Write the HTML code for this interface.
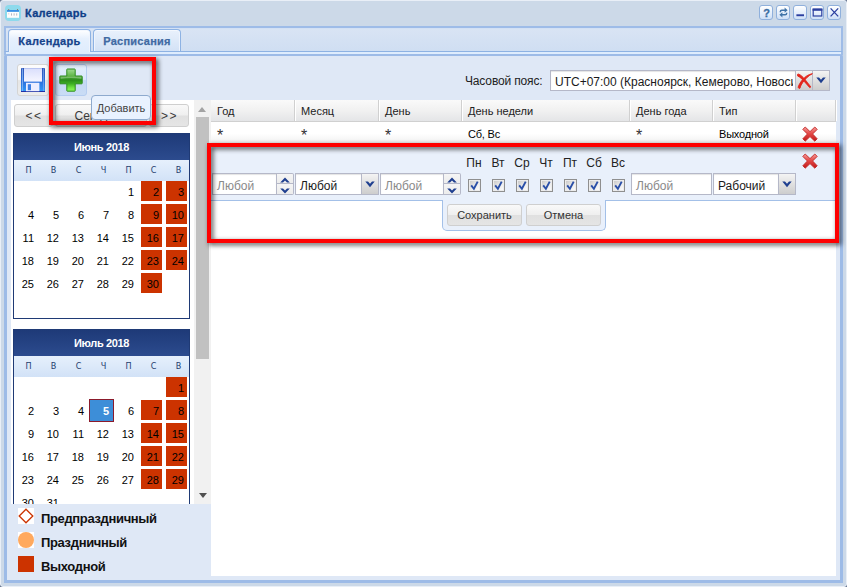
<!DOCTYPE html>
<html lang="ru">
<head>
<meta charset="utf-8">
<title>Календарь</title>
<style>
*{box-sizing:border-box;margin:0;padding:0}
html,body{width:847px;height:587px;overflow:hidden;background:#6b7a94}
body{font-family:"Liberation Sans","DejaVu Sans",sans-serif;font-size:11px;color:#000;position:relative}
.abs{position:absolute}
#win{position:absolute;left:0;top:0;width:847px;height:587px;background:#ccd9e8;border-radius:3px;border:1px solid #e9eff7}
#title{-webkit-text-stroke:.3px #0f3f88;position:absolute;left:25px;top:7px;font-weight:bold;font-size:11px;color:#0f3f88;letter-spacing:.3px;line-height:13px}
.tool svg{margin-left:-.5px}
.tool{position:absolute;top:5px;width:14px;height:15px;border:1px solid #8fb0dc;border-radius:3px;background:linear-gradient(#ffffff,#e4eefb 55%,#cfe0f7)}
/* tab panel */
#strip{position:absolute;left:4px;top:26px;width:839px;height:26px;border:2px solid #9fbce7;border-top:2px solid #9ebce8;border-bottom:0;background:linear-gradient(#d9e4f4,#cfdef2);box-shadow:inset 0 1px 0 #d3e1f4}
#stripb{position:absolute;left:4px;top:51px;width:839px;height:4px;background:#deecfd;border-left:2px solid #9fbce7;border-right:2px solid #9fbce7;border-top:1px solid #8db2e3}
.tab{position:absolute;top:29px;height:22px;box-shadow:inset 0 1px 0 #f4f8fe,inset 1px 0 0 #eef4fd,inset -1px 0 0 #eef4fd;letter-spacing:.25px;border:1px solid #8db2e3;border-bottom:0;border-radius:4px 4px 0 0;font-weight:bold;font-size:11px;color:#416aa3;text-align:center;line-height:22px;background:linear-gradient(#e9f1fc,#d3e2f6)}
.tab{-webkit-text-stroke:.25px #416aa3}
.tab.act{-webkit-text-stroke:.25px #15428b;background:linear-gradient(#ffffff,#e6f0fd 40%,#deecfd);color:#15428b;height:23px;letter-spacing:.35px}
#body{position:absolute;left:4px;top:54px;width:839px;height:529px;background:#dfe8f6;border:3px solid #9dbbe7;border-top:2px solid #9dbbe7;border-radius:3px 3px 0 0}
/* toolbar */
.tbtn{position:absolute;top:64px;width:32px;height:32px;border-radius:3px}
#lbl{position:absolute;left:465px;top:74px;font-size:12px;line-height:15px;color:#222;letter-spacing:-.15px}
.inp{color:#1a1a1a;position:absolute;background:#fff;border:1px solid #b5b8c8;height:21px;font-size:12px;line-height:21px;padding-left:4px;white-space:nowrap;overflow:hidden;box-shadow:inset 0 1px 1px #e4e4e4}
.trg{position:absolute;width:17px;height:21px;border:1px solid #b5b8c8;border-left:0;background:linear-gradient(#f4f4f4,#e0e0e0 50%,#cdcdcd)}
.ph{color:#8a8a8a}
#ed .inp{height:22px;line-height:22px;padding-top:1px}
#ed .trg{height:22px}
#ed .trg svg{margin-top:1px}
.trg.sp{background:linear-gradient(#f5f5f5 0,#ededed 9px,#b5b8c8 9px,#b5b8c8 10px,#f5f5f5 10px,#ededed 19px);border-color:#b5b8c8;border-radius:0 2px 2px 0}
/* left panel */
#left{position:absolute;left:11px;top:100px;width:200px;height:404px;background:#fff;overflow:hidden}
.nbtn{position:absolute;top:4px;height:23px;border:1px solid #cfcfcf;border-radius:3px;background:linear-gradient(#f9f9f9,#efefef 48%,#e0e0e0 52%,#e5e5e5);font-size:12px;color:#3a3a3a;text-align:center;line-height:23px}
.cal{position:absolute;left:2px;width:177px;border:1px solid #1f3a75;background:#fff;overflow:hidden}
.cal .hd{height:26px;background:linear-gradient(#1e3a78,#2c4b8e);color:#fff;font-weight:bold;font-size:11px;text-align:center;line-height:26px;letter-spacing:-.35px}
.cal .dn{height:21px;background:linear-gradient(#e6f0fc,#d2e2f7);display:flex;color:#233d6d;font-size:9px;font-family:'DejaVu Sans Condensed','Liberation Sans',sans-serif;line-height:20px}
.cal .dn span{width:25px;text-align:center;padding-left:4px}
.cal .gr{padding-top:0}
.cal .rw{display:flex;height:23px}
.cal .rw span{width:25px;height:23px;border:2px solid #fff;border-top-width:0;border-bottom-width:3px;text-align:right;padding-right:3px;padding-top:1px;font-size:11px;line-height:21px}
.cal .rw span.r{background:#cc3300}
.cal .rw span.t{background:#3d8ed8;color:#fff;font-weight:bold;border:0;box-shadow:inset 0 0 0 1px #8b1a2b;padding-right:5px;padding-top:2px;margin-top:-1px}
#sb{position:absolute;left:183px;top:0;width:17px;height:404px;background:#f1f1f1}
#sb .th{position:absolute;left:2px;top:17px;width:13px;height:242px;background:#c1c1c1}
.arr{position:absolute;left:4px;width:0;height:0;border-left:4px solid transparent;border-right:4px solid transparent}
/* legend */
.lg{position:absolute;left:18px;width:16px;height:16px}
.lt{position:absolute;left:41px;font-size:13px;font-weight:bold;color:#111;line-height:16px;letter-spacing:-.35px}
/* grid */
#grid{position:absolute;left:211px;top:100px;width:625px;height:476px;background:#fff}
#ghd{position:absolute;left:0;top:0;width:625px;height:22px;background:linear-gradient(#fafafa,#f1f1f1 50%,#e4e5e7);border-bottom:1px solid #d0d0d0}
.hc{position:absolute;top:0;height:21px;border-right:1px solid #d0d0d0;box-shadow:1px 0 0 #fff;padding-left:6px;line-height:22px;font-size:11px;color:#222}
.gc{position:absolute;top:22px;height:21px;line-height:25px;font-size:11px;padding-left:6px;letter-spacing:-.2px}
.gc b{font-weight:normal;position:relative;top:3px;left:0;font-size:16px;line-height:10px;color:#333}
#ed{position:absolute;left:0;top:43px;width:625px;height:58px;background:#e9f0fb;border-bottom:1px solid #a3c0e8}
#btns{position:absolute;left:231px;top:100px;width:164px;height:31px;background:#e9f0fb;border:1px solid #a3c0e8;border-top:0;border-radius:0 0 5px 5px}
.btn{position:absolute;top:4px;width:75px;height:22px;border:1px solid #cfcfcf;border-radius:3px;background:linear-gradient(#f9f9f9,#efefef 48%,#e0e0e0 52%,#e5e5e5);font-size:11px;color:#333;text-align:center;line-height:20px}
.dl{position:absolute;top:13px;width:24px;text-align:center;font-size:12px;line-height:14px;color:#222}
.cb{position:absolute;top:36px;width:13px;height:13px;border:1px solid #8f8f8f;background:linear-gradient(135deg,#c4c4c4,#ececec 55%,#fff);box-shadow:inset 0 0 0 1px #ececec}
.red{position:absolute;border:4px solid #fe0000;filter:drop-shadow(2px 2px 2.5px rgba(0,0,0,.72))}
#tip{position:absolute;left:91px;top:95px;width:60px;height:25px;background:#e9f2ff;border:1px solid #8eaace;border-radius:4px;font-size:11px;color:#444;text-align:center;line-height:24px}
</style>
</head>
<body>
<div id="win"></div>
<div id="title">Календарь</div>

<svg class="abs" style="left:5px;top:5px" width="16" height="16" viewBox="0 0 16 16"><rect width="16" height="16" rx="4" fill="#8ddaec"/><rect x="2" y="6.6" width="12" height="6.2" fill="#fdfdfd"/><rect x="2" y="5" width="12" height="1.8" fill="#3a8ee6"/><rect x="3.2" y="4.2" width="1" height="1" fill="#8a6a55"/><rect x="12" y="4.2" width="1" height="1" fill="#8a6a55"/><g fill="#b9b9c2"><rect x="3.4" y="8.3" width=".8" height="1"/><rect x="6" y="8.3" width="1" height="2.3"/><rect x="8.6" y="8.3" width="1" height="2.3"/><rect x="11.2" y="8.3" width="1" height="2.3"/></g></svg>
<div class="tool" style="left:759px"><svg width="13" height="13" viewBox="0 0 13 13"><text x="6.6" y="10.6" text-anchor="middle" font-family="Liberation Sans, sans-serif" font-weight="bold" font-size="11" fill="#3a6ca3" stroke="#3a6ca3" stroke-width=".3">?</text></svg></div>
<div class="tool" style="left:776px"><svg width="13" height="13" viewBox="0 0 13 13"><g fill="none" stroke="#3f73a8" stroke-width="1.5"><path d="M3.4 6.2 V5.6 Q3.4 4.2 4.8 4.2 H8.8"/><path d="M9.6 6.8 V7.4 Q9.6 8.8 8.2 8.8 H4.2"/></g><path d="M7.6 1.6 L10.6 4.2 L7.6 6.8 Z" fill="#3f73a8"/><path d="M5.4 6.2 L2.4 8.8 L5.4 11.4 Z" fill="#3f73a8"/></svg></div>
<div class="tool" style="left:793px"><svg width="13" height="13" viewBox="0 0 13 13"><rect x="2.4" y="8.3" width="7.6" height="1.9" fill="#2b3f9f"/></svg></div>
<div class="tool" style="left:810px"><svg width="13" height="13" viewBox="0 0 13 13"><rect x="2.2" y="3.2" width="8.6" height="6.8" fill="none" stroke="#2b3f9f" stroke-width="1.2"/><rect x="1.6" y="2.6" width="9.8" height="2.2" fill="#2b3f9f"/></svg></div>
<div class="tool" style="left:827px"><svg width="13" height="13" viewBox="0 0 13 13"><path d="M2.6 2.4 L10.2 10.4 M10.2 2.4 L2.6 10.4" stroke="#2b3f9f" stroke-width="1.3" fill="none"/></svg></div>
<div id="strip"></div>
<div id="stripb"></div>
<div class="tab act" style="left:8px;width:83px">Календарь</div>
<div class="tab" style="left:93px;width:88px">Расписания</div>
<div id="body"></div>
<div class="tbtn" id="bsave" style="left:17px;border:1px solid #d4d4d4;background:linear-gradient(#fcfcfc,#f4f4f4 48%,#e6e6e6 52%,#ececec)"><svg class="abs" style="left:3px;top:3px" width="24" height="24" viewBox="0 0 24 24"><defs><linearGradient id="sv1" x1="0" y1="0" x2="0" y2="1"><stop offset="0" stop-color="#3156b8"/><stop offset=".55" stop-color="#2c6fdc"/><stop offset="1" stop-color="#2f9bf8"/></linearGradient><linearGradient id="sv2" x1="0" y1="0" x2="0" y2="1"><stop offset="0" stop-color="#d9defc"/><stop offset="1" stop-color="#f6f6ff"/></linearGradient></defs><rect x="0" y="0" width="24" height="24" rx=".8" fill="url(#sv1)"/><rect x="1" y="0.5" width="1" height="22.5" fill="#8ab6f2" opacity=".8"/><rect x="22" y="0.5" width="1" height="22.5" fill="#8ab6f2" opacity=".6"/><rect x="0" y="23" width="24" height="1" fill="#2030a6"/><rect x="3" y="0" width="18" height="13.6" fill="url(#sv2)"/><rect x="3" y="0" width="18" height="1" fill="#b9c4f1"/><rect x="5" y="14.8" width="13.4" height="8.4" fill="#eceeff"/><rect x="6.8" y="16.2" width="3.2" height="6" fill="#3c7fe4"/></svg></div>
<div class="tbtn" id="badd" style="left:55px;border:1px solid #b5cdf0;background:linear-gradient(#e3effc,#d8e8fb 48%,#c4d8f3 52%,#c9dcf5)"><svg class="abs" style="left:3px;top:3px" width="24" height="24" viewBox="0 0 24 24"><defs><linearGradient id="pl1" x1="0" y1="0" x2="0" y2="1"><stop offset="0" stop-color="#9fdc90"/><stop offset=".33" stop-color="#5cb444"/><stop offset=".42" stop-color="#3a9a28"/><stop offset=".5" stop-color="#2c8d1c"/><stop offset=".66" stop-color="#3cae22"/><stop offset=".85" stop-color="#72e644"/><stop offset="1" stop-color="#8af65c"/></linearGradient></defs><path d="M8.4 1 H15.6 Q16.2 1 16.2 1.6 V8 H22.6 Q23.2 8 23.2 8.6 V15.2 Q23.2 15.8 22.6 15.8 H16.2 V22.6 Q16.2 23.2 15.6 23.2 H8.4 Q7.8 23.2 7.8 22.6 V15.8 H1.4 Q.8 15.8 .8 15.2 V8.6 Q.8 8 1.4 8 H7.8 V1.6 Q7.8 1 8.4 1 Z" fill="url(#pl1)" stroke="#2d8a1e" stroke-width="1"/><path d="M1.6 8.8 H22.4 V11 Q12 8.8 1.6 11 Z" fill="#fff" opacity=".25"/></svg></div>
<div id="lbl">Часовой пояс:</div>
<div class="inp" style="left:550px;top:70px;width:246px;padding-top:1px"><div style="width:238px;overflow:hidden;white-space:nowrap">UTC+07:00 (Красноярск, Кемерово, Новосибирск)</div></div>
<div class="trg" id="tclr" style="left:796px;top:70px"><svg class="abs" style="left:1px;top:2px" width="16" height="16" viewBox="0 0 16 16" stroke="#e3261c" stroke-width=".9" stroke-linejoin="round"><path d="M1 .9 C3.4 1.4 6.4 4.4 8.6 7.2 C10.6 9.8 12.6 12.3 13.8 13.9 L12.8 14.7 C10.9 12.6 9 10.4 7 8.2 C5 6 3 4 .6 3 C.2 2 .4 1.2 1 .9 Z" fill="#e3261c"/><path d="M15.4 .7 C11.6 2.5 8.2 6 5.8 9.4 C4.2 11.7 3.4 13.5 3 15.2 C2.2 15.7 1.2 15.1 1.2 14 C2 11.5 3.6 9 5.6 6.6 C8.3 3.4 11.6 1.3 15.4 .7 Z" fill="#e3261c"/></svg></div>
<div class="trg" id="tdd" style="left:813px;top:70px"><svg class="abs" style="left:3px;top:6px" width="10" height="7" viewBox="0 0 10 7"><path d="M0.3 .6 H3 L5 2.8 L7 .6 H9.7 L5 6.2 Z" fill="#1f3f8f"/></svg></div>
<div id="left"><div class="nbtn" style="left:3px;width:39px;letter-spacing:1.5px;padding-left:1px">&lt;&lt;</div><div class="nbtn" style="left:44px;width:92px;padding-right:7px">Сегодня</div><div class="nbtn" style="left:138px;width:40px;letter-spacing:1.5px;padding-left:1px">&gt;&gt;</div><div class="cal" style="top:33px;height:186px;"><div class="hd">Июнь 2018</div><div class="dn"><span>П</span><span>В</span><span>С</span><span>Ч</span><span>П</span><span>С</span><span>В</span></div><div class="gr"><div class="rw"><span></span><span></span><span></span><span></span><span>1</span><span class="r">2</span><span class="r">3</span></div><div class="rw"><span>4</span><span>5</span><span>6</span><span>7</span><span>8</span><span class="r">9</span><span class="r">10</span></div><div class="rw"><span>11</span><span>12</span><span>13</span><span>14</span><span>15</span><span class="r">16</span><span class="r">17</span></div><div class="rw"><span>18</span><span>19</span><span>20</span><span>21</span><span>22</span><span class="r">23</span><span class="r">24</span></div><div class="rw"><span>25</span><span>26</span><span>27</span><span>28</span><span>29</span><span class="r">30</span><span></span></div><div class="rw"><span></span><span></span><span></span><span></span><span></span><span></span><span></span></div></div></div><div class="cal" style="top:229px;height:186px;"><div class="hd">Июль 2018</div><div class="dn"><span>П</span><span>В</span><span>С</span><span>Ч</span><span>П</span><span>С</span><span>В</span></div><div class="gr"><div class="rw"><span></span><span></span><span></span><span></span><span></span><span></span><span class="r">1</span></div><div class="rw"><span>2</span><span>3</span><span>4</span><span class="t">5</span><span>6</span><span class="r">7</span><span class="r">8</span></div><div class="rw"><span>9</span><span>10</span><span>11</span><span>12</span><span>13</span><span class="r">14</span><span class="r">15</span></div><div class="rw"><span>16</span><span>17</span><span>18</span><span>19</span><span>20</span><span class="r">21</span><span class="r">22</span></div><div class="rw"><span>23</span><span>24</span><span>25</span><span>26</span><span>27</span><span class="r">28</span><span class="r">29</span></div><div class="rw"><span>30</span><span>31</span><span></span><span></span><span></span><span></span><span></span></div></div></div><div id="sb"><div class="arr" style="top:7px;border-bottom:5px solid #a3a3a3"></div><div class="th"></div><div class="arr" style="top:393px;left:5px;border-top:5px solid #505050"></div></div></div>
<div class="lg" style="top:508px;background:#fff"><svg width="16" height="16" viewBox="0 0 16 16"><path d="M8 1.2 L14.8 8 L8 14.8 L1.2 8 Z" fill="#fff" stroke="#cc3300" stroke-width="1.3"/></svg></div>
<div class="lg" style="top:532px;background:#fff"><svg width="16" height="16" viewBox="0 0 16 16"><circle cx="8" cy="8" r="8" fill="#ffa95e"/></svg></div>
<div class="lg" style="top:556px;background:#cc3300"></div>
<div class="lt" style="top:511px">Предпраздничный</div>
<div class="lt" style="top:535px">Праздничный</div>
<div class="lt" style="top:559px">Выходной</div>
<div id="grid"><div id="ghd"><div class="hc" style="left:0px;width:84px">Год</div><div class="hc" style="left:84px;width:84px">Месяц</div><div class="hc" style="left:168px;width:83px">День</div><div class="hc" style="left:251px;width:168px">День недели</div><div class="hc" style="left:419px;width:83px">День года</div><div class="hc" style="left:502px;width:83px">Тип</div><div class="hc" style="left:585px;width:40px"></div></div><div style="position:absolute;left:0;top:22px;width:625px;height:21px;background:linear-gradient(#fff 55%,#f1f1f1)"></div><div class="gc" style="left:0px"><b>*</b></div><div class="gc" style="left:84px"><b>*</b></div><div class="gc" style="left:168px"><b>*</b></div><div class="gc" style="left:251px">Сб, Вс</div><div class="gc" style="left:419px"><b>*</b></div><div class="gc" style="left:502px">Выходной</div><div class="xi" style="position:absolute;left:591px;top:26px"><svg width="16" height="16" viewBox="0 0 16 16"><defs><linearGradient id="xg" x1="0" y1="0" x2="0" y2="1"><stop offset="0" stop-color="#f59a98"/><stop offset=".45" stop-color="#e54a48"/><stop offset="1" stop-color="#c01818"/></linearGradient></defs><path d="M3.2 1 L8 5.6 L12.8 1 L15.2 3.4 L10.6 8 L15.2 12.8 L12.8 15.2 L8 10.6 L3.2 15.2 L.8 12.8 L5.4 8 L.8 3.4 Z" fill="url(#xg)" stroke="#c22a28" stroke-width=".9" stroke-linejoin="round"/></svg></div><div id="ed"><div class="inp ph" style="left:1px;top:30px;width:65px">Любой</div><div class="trg sp" style="left:66px;top:30px"><svg class="abs" style="left:3px;top:2px" width="10" height="17" viewBox="0 0 10 17"><path d="M.2 5.4 L5 .4 L9.8 5.4 H7 L5 3.4 L3 5.4 Z" fill="#1f3f8f"/><path d="M.2 11.4 H3 L5 13.4 L7 11.4 H9.8 L5 16.4 Z" fill="#1f3f8f"/></svg></div><div class="inp" style="left:84px;top:30px;width:67px">Любой</div><div class="trg dd" style="left:151px;top:30px"><svg class="abs" style="left:3px;top:6px" width="10" height="7" viewBox="0 0 10 7"><path d="M0.3 .6 H3 L5 2.8 L7 .6 H9.7 L5 6.2 Z" fill="#1f3f8f"/></svg></div><div class="inp ph" style="left:169px;top:30px;width:64px">Любой</div><div class="trg sp" style="left:233px;top:30px"><svg class="abs" style="left:3px;top:2px" width="10" height="17" viewBox="0 0 10 17"><path d="M.2 5.4 L5 .4 L9.8 5.4 H7 L5 3.4 L3 5.4 Z" fill="#1f3f8f"/><path d="M.2 11.4 H3 L5 13.4 L7 11.4 H9.8 L5 16.4 Z" fill="#1f3f8f"/></svg></div><div class="dl" style="left:251px">Пн</div><div class="cb" style="left:257px"><svg class="abs" style="left:0;top:0" width="11" height="11" viewBox="0 0 11 11"><path d="M2.2 5.4 L4.9 8.8 L8.7 1.6" stroke="#2a4fa8" stroke-width="1.9" fill="none"/></svg></div><div class="dl" style="left:275px">Вт</div><div class="cb" style="left:281px"><svg class="abs" style="left:0;top:0" width="11" height="11" viewBox="0 0 11 11"><path d="M2.2 5.4 L4.9 8.8 L8.7 1.6" stroke="#2a4fa8" stroke-width="1.9" fill="none"/></svg></div><div class="dl" style="left:299px">Ср</div><div class="cb" style="left:305px"><svg class="abs" style="left:0;top:0" width="11" height="11" viewBox="0 0 11 11"><path d="M2.2 5.4 L4.9 8.8 L8.7 1.6" stroke="#2a4fa8" stroke-width="1.9" fill="none"/></svg></div><div class="dl" style="left:323px">Чт</div><div class="cb" style="left:329px"><svg class="abs" style="left:0;top:0" width="11" height="11" viewBox="0 0 11 11"><path d="M2.2 5.4 L4.9 8.8 L8.7 1.6" stroke="#2a4fa8" stroke-width="1.9" fill="none"/></svg></div><div class="dl" style="left:347px">Пт</div><div class="cb" style="left:353px"><svg class="abs" style="left:0;top:0" width="11" height="11" viewBox="0 0 11 11"><path d="M2.2 5.4 L4.9 8.8 L8.7 1.6" stroke="#2a4fa8" stroke-width="1.9" fill="none"/></svg></div><div class="dl" style="left:371px">Сб</div><div class="cb" style="left:377px"><svg class="abs" style="left:0;top:0" width="11" height="11" viewBox="0 0 11 11"><path d="M2.2 5.4 L4.9 8.8 L8.7 1.6" stroke="#2a4fa8" stroke-width="1.9" fill="none"/></svg></div><div class="dl" style="left:395px">Вс</div><div class="cb" style="left:401px"><svg class="abs" style="left:0;top:0" width="11" height="11" viewBox="0 0 11 11"><path d="M2.2 5.4 L4.9 8.8 L8.7 1.6" stroke="#2a4fa8" stroke-width="1.9" fill="none"/></svg></div><div class="inp ph" style="left:420px;top:30px;width:81px">Любой</div><div class="inp" style="left:502px;top:30px;width:66px">Рабочий</div><div class="trg dd" style="left:568px;top:30px"><svg class="abs" style="left:3px;top:6px" width="10" height="7" viewBox="0 0 10 7"><path d="M0.3 .6 H3 L5 2.8 L7 .6 H9.7 L5 6.2 Z" fill="#1f3f8f"/></svg></div><div class="xi" style="position:absolute;left:591px;top:10px"><svg width="16" height="16" viewBox="0 0 16 16"><defs><linearGradient id="xg2" x1="0" y1="0" x2="0" y2="1"><stop offset="0" stop-color="#f59a98"/><stop offset=".45" stop-color="#e54a48"/><stop offset="1" stop-color="#c01818"/></linearGradient></defs><path d="M3.2 1 L8 5.6 L12.8 1 L15.2 3.4 L10.6 8 L15.2 12.8 L12.8 15.2 L8 10.6 L3.2 15.2 L.8 12.8 L5.4 8 L.8 3.4 Z" fill="url(#xg2)" stroke="#c22a28" stroke-width=".9" stroke-linejoin="round"/></svg></div></div><div id="btns"><div class="btn" style="left:4px">Сохранить</div><div class="btn" style="left:83px">Отмена</div></div></div>
<div class="red" style="left:49px;top:57px;width:107px;height:68px"></div>
<div class="red" style="left:207px;top:143px;width:632px;height:100px"></div>
<div id="tip">Добавить</div>
</body>
</html>
